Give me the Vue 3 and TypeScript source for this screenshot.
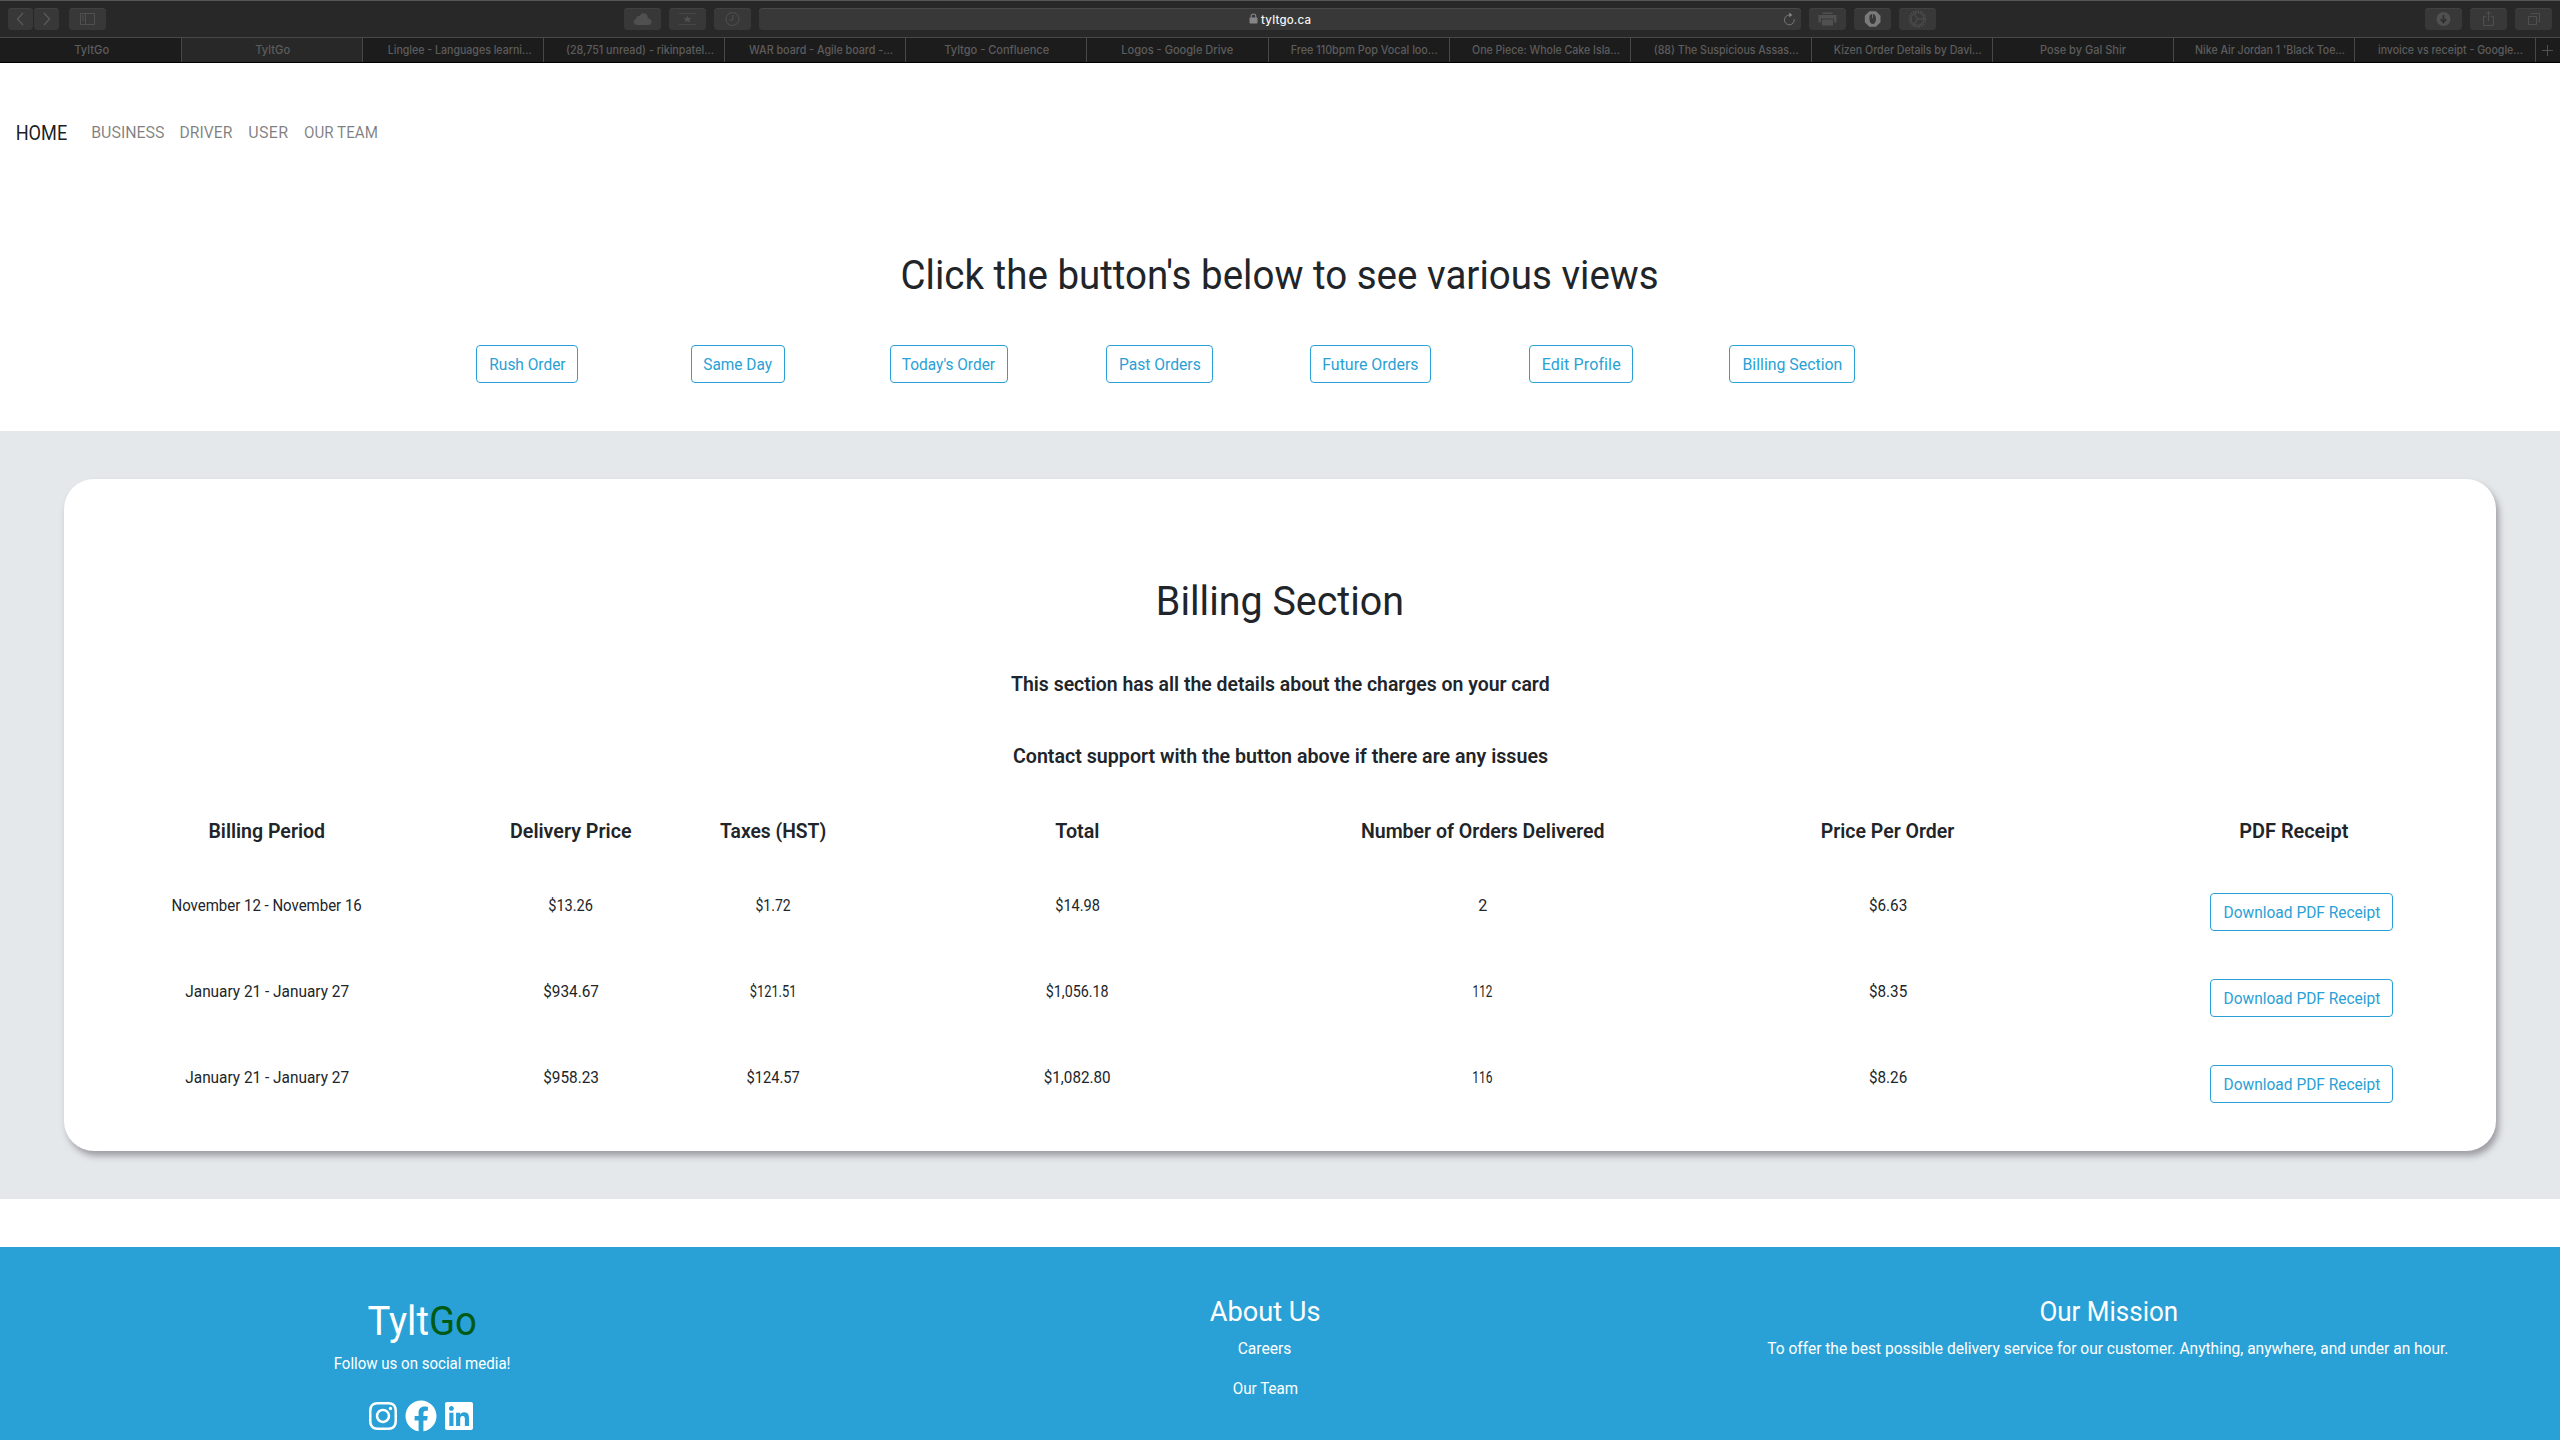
<script setup lang="ts">
interface Label {
  text: string
  w: number
}
interface Tab extends Label {
  cut?: boolean
  active?: boolean
}
interface ActionButton extends Label {
  box: number
}

// Makes a single-line label span the given width: letters are spread when it
// is too short and condensed when it is too long.
const vFit = {
  mounted(el: HTMLElement, binding: { value: number }) {
    const count = (el.textContent ?? '').trim().length
    if (count < 2) return
    const size = parseFloat(getComputedStyle(el).fontSize)
    const natural = el.getBoundingClientRect().width
    const target = binding.value + size * 0.08
    if (target < natural) {
      const trim = (target - natural) / 2
      el.style.transform = `scaleX(${target / natural})`
      el.style.marginLeft = `${trim}px`
      el.style.marginRight = `${trim}px`
      return
    }
    const spacing = (target - natural) / (count - 1)
    el.style.letterSpacing = `${spacing}px`
    el.style.marginRight = `${-spacing}px`
  },
}

const tabs: Tab[] = [
  { text: 'TyltGo', w: 34 },
  { text: 'TyltGo', w: 34, active: true },
  { text: 'Linglee - Languages learni...', w: 143, cut: true },
  { text: '(28,751 unread) - rikinpatel...', w: 147, cut: true },
  { text: 'WAR board - Agile board -...', w: 143, cut: true },
  { text: 'Tyltgo - Confluence', w: 104 },
  { text: 'Logos - Google Drive', w: 111 },
  { text: 'Free 110bpm Pop Vocal loo...', w: 146, cut: true },
  { text: 'One Piece: Whole Cake Isla...', w: 147, cut: true },
  { text: '(88) The Suspicious Assas...', w: 144, cut: true },
  { text: 'Kizen Order Details by Davi...', w: 147, cut: true },
  { text: 'Pose by Gal Shir', w: 85 },
  { text: "Nike Air Jordan 1 'Black Toe...", w: 149, cut: true },
  { text: 'invoice vs receipt - Google...', w: 144, cut: true },
]

const links: Label[] = [
  { text: 'BUSINESS', w: 72 },
  { text: 'DRIVER', w: 51.5 },
  { text: 'USER', w: 38.5 },
  { text: 'OUR TEAM', w: 72.5 },
]

const actions: ActionButton[] = [
  { text: 'Rush Order', w: 75, box: 102 },
  { text: 'Same Day', w: 67.5, box: 94 },
  { text: "Today's Order", w: 92, box: 118 },
  { text: 'Past Orders', w: 80.5, box: 107 },
  { text: 'Future Orders', w: 95, box: 121 },
  { text: 'Edit Profile', w: 77, box: 104 },
  { text: 'Billing Section', w: 98.5, box: 126 },
]

const headers: Label[] = [
  { text: 'Billing Period', w: 115 },
  { text: 'Delivery Price', w: 120 },
  { text: 'Taxes (HST)', w: 104.5 },
  { text: 'Total', w: 42.5 },
  { text: 'Number of Orders Delivered', w: 242 },
  { text: 'Price Per Order', w: 132 },
  { text: 'PDF Receipt', w: 107.5 },
]

const rows: Label[][] = [
  [
    { text: 'November 12 - November 16', w: 189 },
    { text: '$13.26', w: 43.5 },
    { text: '$1.72', w: 34 },
    { text: '$14.98', w: 43.5 },
    { text: '2', w: 7 },
    { text: '$6.63', w: 37 },
  ],
  [
    { text: 'January 21 - January 27', w: 162.5 },
    { text: '$934.67', w: 54.5 },
    { text: '$121.51', w: 45.5 },
    { text: '$1,056.18', w: 61.5 },
    { text: '112', w: 18.5 },
    { text: '$8.35', w: 37 },
  ],
  [
    { text: 'January 21 - January 27', w: 162.5 },
    { text: '$958.23', w: 54.5 },
    { text: '$124.57', w: 52 },
    { text: '$1,082.80', w: 65.5 },
    { text: '116', w: 19 },
    { text: '$8.26', w: 37 },
  ],
]
</script>

<template>
  <div class="page">
    <div class="toolbar">
      <div class="tool narrow">
        <svg width="25" height="22" viewBox="0 0 25 22"><path d="M15 5 L9.5 11 L15 17" class="line strong" /></svg>
      </div>
      <div class="tool narrow next">
        <svg width="25" height="22" viewBox="0 0 25 22"><path d="M10 5 L15.5 11 L10 17" class="line strong" /></svg>
      </div>
      <div class="tool side">
        <svg width="37" height="22" viewBox="0 0 37 22">
          <path d="M11.5 5.5 H25.5 V16.5 H11.5 Z M16.5 5.5 V16.5 M13 8 H15 M13 10 H15 M13 12 H15" class="line" />
        </svg>
      </div>
      <div class="tool cloud">
        <svg width="37" height="22" viewBox="0 0 37 22">
          <path d="M13.5 17 C8.7 17 8.6 11.6 12.2 11 C11.9 8.3 14.3 7.4 15.5 8.3 C17.3 3.4 24 4.6 23.8 10.2 C28.8 10.4 28.7 17 24.3 17 Z" class="solid" />
        </svg>
      </div>
      <div class="tool">
        <svg width="37" height="22" viewBox="0 0 37 22">
          <path d="M10 5.5 H27 M10 16.5 H27" class="line faint" />
          <path d="M18.5 7 L19.6 9.9 H22.7 L20.3 11.7 L21.2 14.6 L18.5 12.9 L15.8 14.6 L16.7 11.7 L14.3 9.9 H17.4 Z" class="solid" />
        </svg>
      </div>
      <div class="tool">
        <svg width="37" height="22" viewBox="0 0 37 22">
          <circle cx="18.5" cy="11" r="6.5" class="line" />
          <path d="M18.8 7 V12 H15.5" class="line" />
        </svg>
      </div>
      <div class="address">
        <svg class="lock" width="9" height="11" viewBox="0 0 9 11">
          <rect x="0.5" y="4.6" width="8" height="6" rx="0.8" fill="#858585" />
          <path d="M2.2 5 V3.2 C2.2 0.2 6.8 0.2 6.8 3.2 V5" fill="none" stroke="#858585" stroke-width="1.1" />
        </svg>
        <span v-fit="49" class="host">tyltgo.ca</span>
        <svg class="reload" width="13" height="14" viewBox="0 0 13 14">
          <path d="M6.6 3 A4.9 4.9 0 1 0 11.2 7.2" fill="none" stroke="#7c7c7c" stroke-width="0.9" />
          <path d="M6.2 0.6 L9.4 3 L6.2 5.2 Z" fill="#858585" />
        </svg>
      </div>
      <div class="tool">
        <svg width="37" height="22" viewBox="0 0 37 22">
          <path d="M13.5 4.5 H23.5 V6 H13.5 Z M9.5 7 H27.5 V14.5 H25 V10.5 H12 V14.5 H9.5 Z M13 11.5 H24 V17.5 H13 Z" class="solid" />
        </svg>
      </div>
      <div class="tool">
        <svg width="37" height="22" viewBox="0 0 37 22">
          <path d="M15.4 3.2 H22 L26.5 7.8 V14.3 L22 18.8 H15.4 L10.8 14.3 V7.8 Z" fill="#7b7b7b" />
          <path d="M15.5 10 C15 7 17 6 18.5 6 C21 6 22 8 22 11 C22 14 20.5 16 18.6 16 C16.5 16 15.3 13 15.5 10 Z" fill="#383838" />
          <path d="M18.5 6 V10.3" stroke="#7b7b7b" stroke-width="0.8" />
        </svg>
      </div>
      <div class="tool">
        <svg width="37" height="22" viewBox="0 0 37 22">
          <circle cx="18.5" cy="11" r="6.4" class="line" />
          <circle cx="18.5" cy="11" r="8" fill="none" stroke="#505050" stroke-width="1.7" stroke-dasharray="1.3 1.21" />
          <path d="M18.5 11 H25 M18.5 11 L15.2 5.5 M18.5 11 L15.2 16.5" class="line" />
        </svg>
      </div>
      <div class="tool download">
        <svg width="37" height="22" viewBox="0 0 37 22">
          <circle cx="18.5" cy="11" r="7" class="solid" />
          <path d="M18.5 7 V13.6 M15.7 11.2 L18.5 14.3 L21.3 11.2" fill="none" stroke="#303030" stroke-width="1.8" />
        </svg>
      </div>
      <div class="tool">
        <svg width="37" height="22" viewBox="0 0 37 22">
          <path d="M16 8.5 H13.5 V17.5 H23.5 V8.5 H21 M18.5 13 V3.8 M15.8 6.3 L18.5 3.6 L21.2 6.3" class="line" />
        </svg>
      </div>
      <div class="tool">
        <svg width="37" height="22" viewBox="0 0 37 22">
          <path d="M13.5 8.5 H21.5 V16.5 H13.5 Z M16.5 6.5 V5.5 H24.5 V13.5 H23" class="line" />
        </svg>
      </div>
    </div>

    <div class="tabs">
      <div v-for="(tab, i) in tabs" :key="i" class="tab" :class="{ active: tab.active, cut: tab.cut }">
        <span v-fit="tab.w" class="fit">{{ tab.text }}</span>
      </div>
      <div class="new-tab">
        <svg width="11" height="11" viewBox="0 0 11 11"><path d="M5.5 0 V11 M0 5.5 H11" class="line" /></svg>
      </div>
    </div>

    <nav class="nav">
      <a class="brand"><span v-fit="50" class="fit">HOME</span></a>
      <a v-for="link in links" :key="link.text" class="link"><span v-fit="link.w" class="fit">{{ link.text }}</span></a>
    </nav>

    <h1 class="title views"><span v-fit="755" class="fit">Click the button's below to see various views</span></h1>
    <div class="actions">
      <div v-for="action in actions" :key="action.text" class="action">
        <button class="btn" :style="{ width: action.box + 'px' }">
          <span v-fit="action.w" class="fit">{{ action.text }}</span>
        </button>
      </div>
    </div>

    <section class="band">
      <div class="card">
        <h1 class="title"><span v-fit="245" class="fit">Billing Section</span></h1>
        <p class="note"><span v-fit="537" class="fit">This section has all the details about the charges on your card</span></p>
        <p class="note"><span v-fit="533.5" class="fit">Contact support with the button above if there are any issues</span></p>
        <div class="row head">
          <div v-for="h in headers" :key="h.text"><span v-fit="h.w" class="fit">{{ h.text }}</span></div>
        </div>
        <div v-for="(row, r) in rows" :key="r" class="row data">
          <div v-for="(cell, c) in row" :key="c" class="cell"><span v-fit="cell.w" class="fit">{{ cell.text }}</span></div>
          <div class="receipt">
            <button class="btn wide"><span v-fit="155.5" class="fit">Download PDF Receipt</span></button>
          </div>
        </div>
      </div>
    </section>

    <footer class="footer">
      <div class="col">
        <div class="logo"><span v-fit="106" class="fit">Tylt<span class="go">Go</span></span></div>
        <p class="follow"><span v-fit="175.5" class="fit">Follow us on social media!</span></p>
        <div class="social">
          <svg width="28" height="32" viewBox="0 0 448 512">
            <path fill="#fff" d="M224.1 141c-63.6 0-114.9 51.3-114.9 114.9s51.3 114.9 114.9 114.9S339 319.5 339 255.9 287.7 141 224.1 141zm0 189.6c-41.1 0-74.7-33.5-74.7-74.7s33.5-74.7 74.7-74.7 74.7 33.5 74.7 74.7-33.6 74.7-74.7 74.7zm146.4-194.3c0 14.9-12 26.8-26.8 26.8-14.9 0-26.8-12-26.8-26.8s12-26.8 26.8-26.8 26.8 12 26.8 26.8zm76.1 27.2c-1.7-35.9-9.9-67.7-36.2-93.9-26.2-26.2-58-34.4-93.9-36.2-37-2.1-147.9-2.1-184.9 0-35.8 1.7-67.6 9.9-93.9 36.1s-34.4 58-36.2 93.9c-2.1 37-2.1 147.9 0 184.9 1.7 35.9 9.9 67.7 36.2 93.9s58 34.4 93.9 36.2c37 2.1 147.9 2.1 184.9 0 35.9-1.7 67.7-9.9 93.9-36.2 26.2-26.2 34.4-58 36.2-93.9 2.1-37 2.1-147.8 0-184.8zM398.8 388c-7.8 19.6-22.9 34.7-42.6 42.6-29.5 11.7-99.5 9-132.1 9s-102.7 2.6-132.1-9c-19.6-7.8-34.7-22.9-42.6-42.6-11.7-29.5-9-99.5-9-132.1s-2.6-102.7 9-132.1c7.8-19.6 22.9-34.7 42.6-42.6 29.5-11.7 99.5-9 132.1-9s102.7-2.6 132.1 9c19.6 7.8 34.7 22.9 42.6 42.6 11.7 29.5 9 99.5 9 132.1s2.7 102.7-9 132.1z" />
          </svg>
          <svg width="32" height="32" viewBox="0 0 512 512">
            <path fill="#fff" d="M504 256C504 119 393 8 256 8S8 119 8 256c0 123.78 90.69 226.38 209.25 245V327.69h-63V256h63v-54.64c0-62.15 37-96.48 93.67-96.48 27.14 0 55.52 4.84 55.52 4.84v61h-31.28c-30.8 0-40.41 19.12-40.41 38.73V256h68.78l-11 71.69h-57.78V501C413.31 482.38 504 379.78 504 256z" />
          </svg>
          <svg width="28" height="32" viewBox="0 0 448 512">
            <path fill="#fff" d="M416 32H31.9C14.3 32 0 46.5 0 64.3v383.4C0 465.5 14.3 480 31.9 480H416c17.6 0 32-14.5 32-32.3V64.3c0-17.8-14.4-32.3-32-32.3zM135.4 416H69V202.2h66.5V416zm-33.2-243c-21.3 0-38.5-17.3-38.5-38.5S80.9 96 102.2 96c21.2 0 38.5 17.3 38.5 38.5 0 21.3-17.2 38.5-38.5 38.5zm282.1 243h-66.4V312c0-24.8-.5-56.7-34.5-56.7-34.6 0-39.9 27-39.9 54.9V416h-66.4V202.2h63.7v29.2h.9c8.9-16.8 30.6-34.5 62.9-34.5 67.2 0 79.7 44.3 79.7 101.9V416z" />
          </svg>
        </div>
      </div>
      <div class="col">
        <h3 class="heading"><span v-fit="108.5" class="fit">About Us</span></h3>
        <p class="item"><span v-fit="52.5" class="fit">Careers</span></p>
        <p class="item spaced"><span v-fit="64" class="fit">Our Team</span></p>
      </div>
      <div class="col">
        <h3 class="heading"><span v-fit="136.5" class="fit">Our Mission</span></h3>
        <p class="item"><span v-fit="680" class="fit">To offer the best possible delivery service for our customer. Anything, anywhere, and under an hour.</span></p>
      </div>
    </footer>
  </div>
</template>

<style>
html,
body {
  margin: 0;
  background: #fff;
  overflow: hidden;
}
</style>

<style scoped>
.page {
  width: 2560px;
  height: 1440px;
  overflow: hidden;
  background: #fff;
  color: #212529;
  font-family: Roboto, 'Liberation Sans', sans-serif;
  font-size: 16px;
  line-height: 24px;
}
.page * {
  box-sizing: border-box;
}
.fit {
  display: inline-block;
  white-space: nowrap;
}
h1,
h3,
p {
  margin: 0;
}
svg {
  display: block;
}
.line {
  fill: none;
  stroke: #505050;
  stroke-width: 1;
}
.strong {
  stroke: #5a5a5a;
  stroke-width: 1.3;
}
.faint {
  stroke: #474747;
}
.solid {
  fill: #505050;
}

.toolbar {
  display: flex;
  height: 38px;
  padding: 7px 8px 0;
  gap: 8px;
  background: #282828;
  border-top: 1px solid #555756;
  border-bottom: 1px solid #484848;
}
.tool {
  flex: none;
  width: 37px;
  height: 22px;
  border-radius: 4px;
  background: #383838;
  box-shadow: inset 0 1px #414141;
}
.narrow {
  width: 25px;
}
.next {
  margin-left: -7px;
}
.side {
  margin-left: 2px;
}
.cloud {
  margin-left: 510px;
}
.download {
  margin-left: auto;
}
.address {
  position: relative;
  flex: none;
  display: flex;
  align-items: center;
  width: 1042px;
  height: 22px;
  padding-left: 490px;
  border-radius: 4px;
  background: #383838;
  box-shadow: inset 0 1px #484848;
  color: #f4f4f4;
  font: 500 11.5px/22px Inter, sans-serif;
}
.host {
  display: inline-block;
  padding-top: 1px;
}
.lock {
  margin: -2px 3px 0 0;
}
.reload {
  position: absolute;
  right: 5px;
  top: 4px;
}
.tabs {
  display: flex;
  height: 25px;
  padding-left: 1.4px;
  background: #1c1c1c;
  border-bottom: 1px solid #000;
  color: #5c5c5c;
  font: 500 11.3px/24px Inter, sans-serif;
}
.tab {
  flex: none;
  display: flex;
  justify-content: center;
  width: 181.03px;
  border-right: 1px solid #484848;
}
.tab.cut {
  padding-left: 12px;
}
.tab.active {
  background: #282828;
}
.new-tab {
  flex: 1;
  display: flex;
  align-items: center;
  justify-content: center;
}

.nav {
  display: flex;
  align-items: center;
  height: 140px;
  padding-left: 16px;
}
.brand {
  width: 75px;
  color: rgba(0, 0, 0, 0.9);
  font-size: 20px;
}
.link {
  margin-right: 15.6px;
  color: rgba(0, 0, 0, 0.5);
}
.title {
  height: 48px;
  text-align: center;
  font-size: 40px;
  font-weight: 400;
  line-height: 48px;
}
.views {
  margin-top: 49px;
}
.actions {
  display: grid;
  grid-template-columns: repeat(7, 210.83px);
  padding-left: 421.67px;
  margin-top: 45px;
  margin-bottom: 48px;
}
.action {
  display: flex;
  justify-content: center;
}
.btn {
  display: flex;
  align-items: center;
  justify-content: center;
  height: 38px;
  padding: 2px 0 0;
  border: 1px solid #29a1d6;
  border-radius: 4px;
  background: transparent;
  color: #29a1d6;
  font: 400 16px/24px Roboto, sans-serif;
}
.wide {
  width: 183px;
}

.band {
  height: 768px;
  padding: 48px 64px;
  background: #e4e8eb;
}
.card {
  height: 672px;
  padding-top: 99px;
  border-radius: 30px;
  background: #fff;
  box-shadow: 3px 5px 6px rgba(90, 85, 95, 0.5);
}
.note {
  margin-top: 46px;
  text-align: center;
  font-size: 20px;
  font-weight: 600;
}
.note + .note {
  margin-top: 48px;
}
.row {
  display: grid;
  grid-template-columns: 2fr 1fr 1fr 2fr 2fr 2fr 2fr;
  text-align: center;
}
.head {
  margin-top: 51px;
  font-size: 20px;
  font-weight: 600;
}
.data {
  height: 38px;
  margin-top: 48px;
}
.head + .data {
  margin-top: 50px;
}
.cell {
  padding-top: 1px;
}
.receipt {
  display: flex;
  justify-content: center;
  padding-left: 17px;
}

.footer {
  display: grid;
  grid-template-columns: repeat(3, 843.33px);
  height: 193px;
  margin-top: 48px;
  background: #29a1d6;
  color: #fff;
  text-align: center;
}
.logo {
  margin-top: 51px;
  font-size: 40px;
  line-height: 48px;
}
.go {
  color: #005a14;
}
.follow {
  margin-top: 6px;
}
.social {
  display: flex;
  justify-content: center;
  gap: 8px;
  margin-top: 24px;
  padding-right: 1px;
}
.heading {
  margin-top: 48px;
  font-size: 28px;
  font-weight: 400;
  line-height: 34px;
}
.item {
  margin-top: 8px;
}
.spaced {
  margin-top: 16px;
}
</style>
